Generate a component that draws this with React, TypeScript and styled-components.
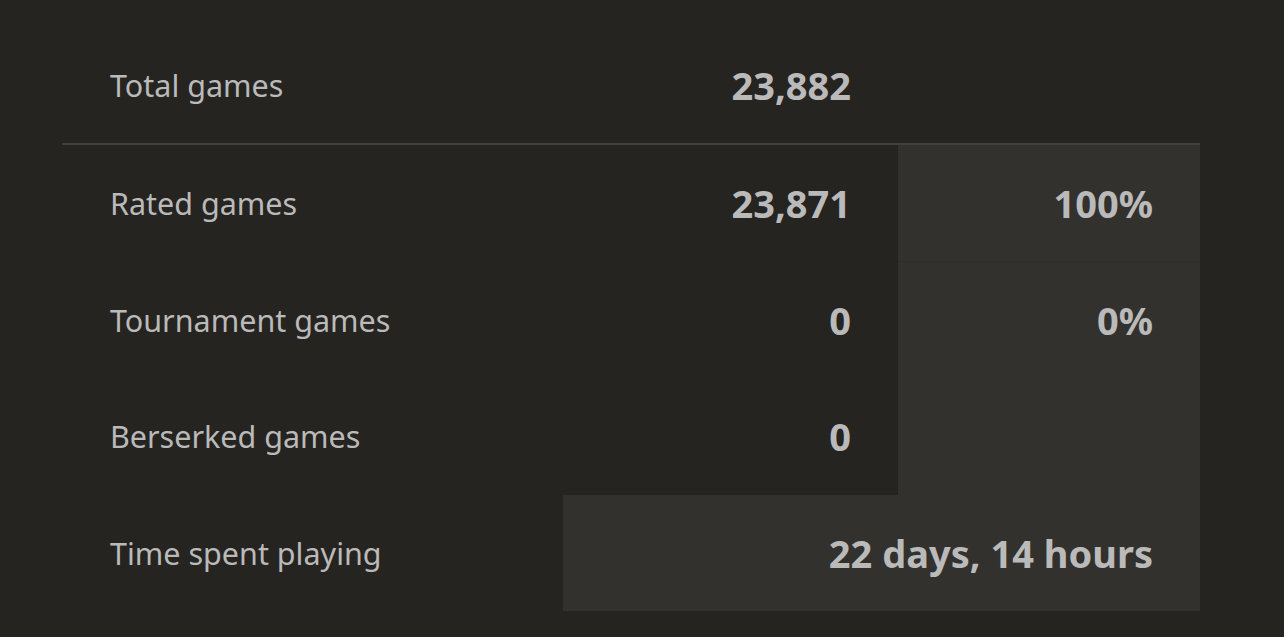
import React from 'react'
import styled, { createGlobalStyle } from 'styled-components'

const GlobalStyle = createGlobalStyle`
  html, body {
    margin: 0;
    padding: 0;
    background: #262421;
  }
  body {
    font-family: 'Noto Sans', 'Liberation Sans', sans-serif;
    color: #bababa;
  }
`

const Page = styled.div`
  box-sizing: border-box;
  width: 1284px;
  height: 637px;
  padding: 27px 0 0 62px;
`

const Stats = styled.div`
  display: grid;
  width: 1138px;
  grid-template-columns: 501px 335px 302px;
  grid-template-rows: 116px 2px repeat(4, 116.5px);
`

const Rule = styled.div`
  grid-column: 1 / -1;
  background: #404040;
`

const Label = styled.div`
  display: flex;
  align-items: center;
  padding-left: 48px;
  font-size: 30.5px;
  white-space: nowrap;
`

type CellProps = { $shaded?: boolean; $span?: number; $divider?: boolean }

const Value = styled.div<CellProps>`
  display: flex;
  align-items: center;
  justify-content: flex-end;
  padding-right: 47px;
  font-size: 38px;
  font-weight: 700;
  white-space: nowrap;
  grid-column: span ${({ $span }) => $span ?? 1};
  background: ${({ $shaded }) => ($shaded ? '#33312d' : 'transparent')};
  box-shadow: ${({ $divider }) => ($divider ? 'inset 0 -1px 0 #2e2c29' : 'none')};
`

type Row = {
  label: string
  value: string
  percent?: string | null
  shadePercent?: boolean
  span?: boolean
}

const rows: Row[] = [
  { label: 'Rated games', value: '23,871', percent: '100%', shadePercent: true },
  { label: 'Tournament games', value: '0', percent: '0%', shadePercent: true },
  { label: 'Berserked games', value: '0', percent: '', shadePercent: true },
  { label: 'Time spent playing', value: '22 days, 14 hours', span: true },
]

export default function App() {
  return (
    <>
      <GlobalStyle />
      <Page>
        <Stats>
          <Label>Total games</Label>
          <Value>23,882</Value>
          <Value />
          <Rule />
          {rows.map((r, i) => (
            <React.Fragment key={r.label}>
              <Label>{r.label}</Label>
              {r.span ? (
                <Value $shaded $span={2}>
                  {r.value}
                </Value>
              ) : (
                <>
                  <Value>{r.value}</Value>
                  <Value $shaded={r.shadePercent} $divider={i === 0}>
                    {r.percent}
                  </Value>
                </>
              )}
            </React.Fragment>
          ))}
        </Stats>
      </Page>
    </>
  )
}
